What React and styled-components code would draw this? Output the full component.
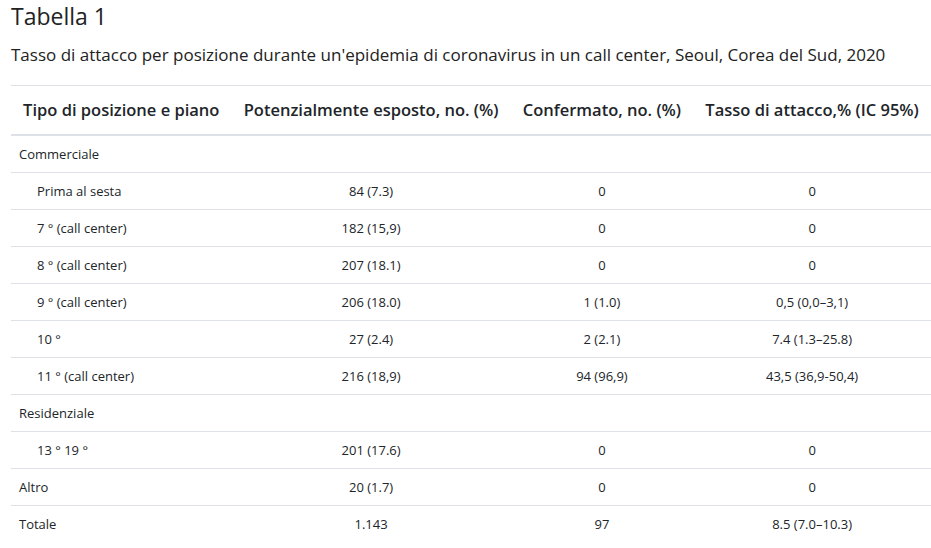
import React from "react";
import styled, { createGlobalStyle } from "styled-components";

const Global = createGlobalStyle`
  html, body { margin: 0; padding: 0; background: #fff; }
  body { font-family: "Open Sans", "Liberation Sans", sans-serif; color: #212529; }
`;

const Page = styled.div`
  padding: 0 0 0 11px;
`;

const Title = styled.h1`
  margin: 0;
  font-size: 23px;
  line-height: 32px;
  font-weight: 400;
  color: #222;
`;

const Caption = styled.p`
  margin: 11px 0 18px;
  font-size: 17px;
  line-height: 24px;
  color: #222;
`;

const Table = styled.table`
  width: 920px;
  border-collapse: collapse;
`;

const Th = styled.th`
  padding: 12px;
  font-size: 16.5px;
  line-height: 24px;
  font-weight: 600;
  color: #212529;
  text-align: center;
  white-space: nowrap;
  border-top: 1px solid #dee2e6;
  border-bottom: 2px solid #dee2e6;
`;

const Td = styled.td`
  padding: 8px 8px 8px ${(p) => (p.$indent ? "26px" : "8px")};
  font-size: 13px;
  line-height: 20px;
  color: #212529;
  text-align: ${(p) => (p.$left ? "left" : "center")};
  border-top: 1px solid #dee2e6;
  white-space: nowrap;
`;

const headers = [
  "Tipo di posizione e piano",
  "Potenzialmente esposto, no. (%)",
  "Confermato, no. (%)",
  "Tasso di attacco,% (IC 95%)",
];

const rows = [
  { label: "Commerciale", group: true },
  { label: "Prima al sesta", indent: true, v: ["84 (7.3)", "0", "0"] },
  { label: "7 ° (call center)", indent: true, v: ["182 (15,9)", "0", "0"] },
  { label: "8 ° (call center)", indent: true, v: ["207 (18.1)", "0", "0"] },
  { label: "9 ° (call center)", indent: true, v: ["206 (18.0)", "1 (1.0)", "0,5 (0,0–3,1)"] },
  { label: "10 °", indent: true, v: ["27 (2.4)", "2 (2.1)", "7.4 (1.3–25.8)"] },
  { label: "11 ° (call center)", indent: true, v: ["216 (18,9)", "94 (96,9)", "43,5 (36,9-50,4)"] },
  { label: "Residenziale", group: true },
  { label: "13 ° 19 °", indent: true, v: ["201 (17.6)", "0", "0"] },
  { label: "Altro", v: ["20 (1.7)", "0", "0"] },
  { label: "Totale", v: ["1.143", "97", "8.5 (7.0–10.3)"] },
];

export default function App() {
  return (
    <Page>
      <Global />
      <Title>Tabella 1</Title>
      <Caption>
        Tasso di attacco per posizione durante un'epidemia di coronavirus in un call center, Seoul, Corea del Sud, 2020
      </Caption>
      <Table>
        <thead>
          <tr>
            {headers.map((h) => (
              <Th key={h}>{h}</Th>
            ))}
          </tr>
        </thead>
        <tbody>
          {rows.map((r) => (
            <tr key={r.label}>
              <Td $left $indent={r.indent}>{r.label}</Td>
              {(r.v || ["", "", ""]).map((c, i) => (
                <Td key={i}>{c}</Td>
              ))}
            </tr>
          ))}
        </tbody>
      </Table>
    </Page>
  );
}
